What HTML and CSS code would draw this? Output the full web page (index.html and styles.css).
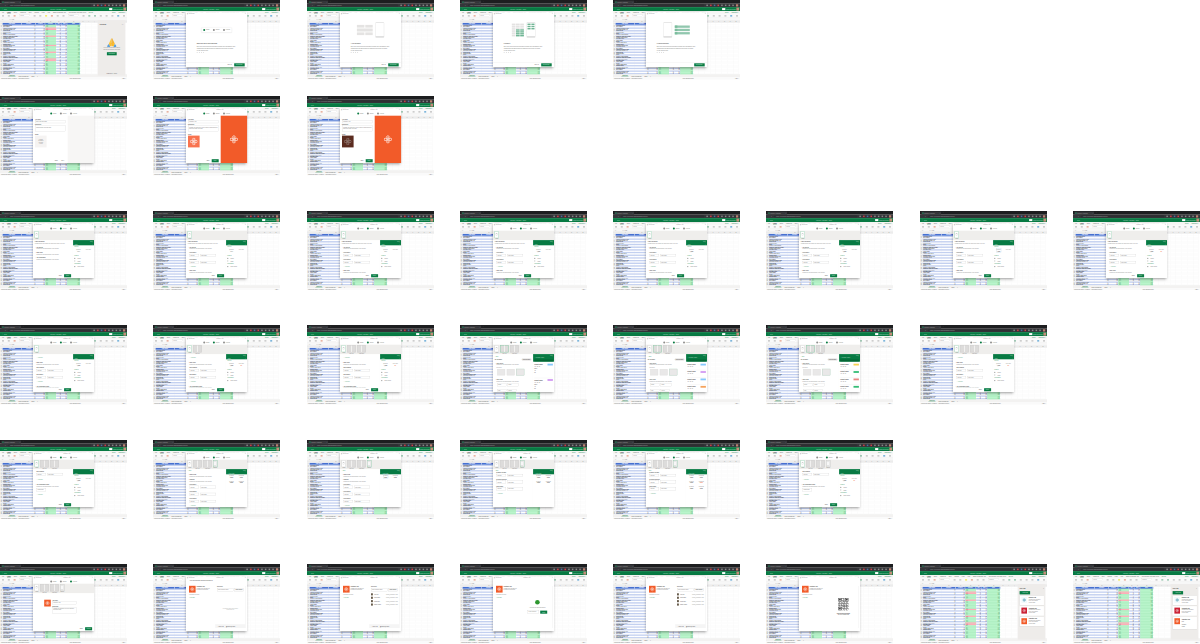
FILE: index.html
```html
<!DOCTYPE html>
<html lang="en">
<head>
<meta charset="utf-8">
<title>App builder flow</title>
<link rel="stylesheet" href="styles.css">
</head>
<body>
<main class="board" id="board"></main>
<script src="app.js"></script>
</body>
</html>
```

FILE: styles.css
```css
* { box-sizing: border-box; }
body { margin: 0; background: #fff; width: 1200px; height: 644px; overflow: hidden; font-family: "Open Sans", "Noto Sans", sans-serif; }
.board { display: grid; grid-template-rows: 96.3px 114.6px 114.5px 114.6px 124.5px 80px; }
.row { display: grid; grid-template-columns: repeat(8, 127px); column-gap: 26.25px; }
.frame { width: 127px; height: 79.5px; overflow: hidden; }
/* each screen is drawn at ten times its board size */
.screen { position: relative; width: 1270px; height: 795px; transform: scale(.1); transform-origin: 0 0; display: flex; flex-direction: column; font-size: 12px; line-height: 15px; color: #555; background: #fff; white-space: nowrap; }
.f { display: flex; align-items: center; }
.grow { flex: 1; }
.tabs { height: 37px; background: #1d1e20; color: #aaa; padding-left: 14px; gap: 20px; font-size: 11px; }
.tab { width: 197px; height: 31px; align-self: flex-end; background: #35363a; padding: 0 10px; gap: 8px; justify-content: space-between; }
.fav { width: 11px; height: 11px; background: #17a865; }
.addr { height: 34px; background: #35363a; color: #aaa; padding: 0 18px; gap: 22px; font-size: 12px; }
.url { flex: 1; height: 24px; border-radius: 12px; background: #2e2f32; padding: 3px 20px; }
.ext { width: 15px; height: 15px; background: #888; }
.ext.r { background: #d33e48; } .ext.b { background: #496ca1; } .ext.g { background: #be8270; width: 22px; height: 22px; }
.brand { height: 40px; background: #077a43; color: #b7dfc8; padding: 0 8px 0 16px; gap: 24px; justify-content: space-between; }
.toggle { width: 32px; height: 20px; background: #fff; }
.face { width: 28px; height: 30px; background: #c58d7b; }
.menu { height: 28px; background: #f6f5f4; padding: 0 20px; gap: 29px; color: #555; font-size: 13px; }
.menu .on { color: #333; font-weight: 700; border-bottom: 3px solid #217346; }
.menu .gr { color: #21854e; }
.tools { height: 41px; background: #fafafa; border-bottom: 2px solid #ddd; padding: 0 20px; justify-content: space-between; }
.tool { width: 20px; height: 15px; background: #c8c8c8; }
.tool.y { background: #f2e95e; } .tool.r { background: #e6ab98; } .tool.bl { background: #71afd8; } .tool.gr { background: #9bc8b2; }
.sel { width: 104px; height: 22px; background: #fff; border: 2px solid #ccc; color: #888; padding-left: 8px; }
.formula { height: 26px; padding: 0 18px; gap: 50px; border-bottom: 2px solid #ddd; color: #777; background: #f7f7f7; }
.heads, .line { display: grid; grid-template-columns: 26px 194px 140px 94px 108px 54px 58px 128px repeat(8, 57px); }
.heads { height: 21px; background: #ececec; color: #777; text-align: center; }
.lines { height: 520px; overflow: hidden; background: linear-gradient(90deg, transparent 454px, #b9f4cb 454px 562px, transparent 562px 674px, #b9f4cb 674px 802px, transparent 802px); }
.line { height: 13.45px; line-height: 13.4px; font-size: 11.5px; }
.line span { overflow: hidden; text-align: right; padding: 0 5px; color: #555; }
.line .e { border-right: 1px solid #e1e1e1; border-bottom: 1px solid #e8e8e8; }
.line span:first-child { background: #eee; color: #888; padding: 0 2px; text-align: center; }
.line span:nth-child(2) { text-align: left; color: #333; font-weight: 600; font-size: 11px; }
.line .d { border-right: 1px solid #d5dbe9; }
.line.odd .d { background-color: #c3d0f0; }
.line span.good { background: none; color: #4c9463; border: 0; }
.line.odd span.good { background: #b0efc3; }
.line span.bad, .line.odd span.bad { background-color: #ffadb8; color: #b5525a; border: 0; }
.line.top { height: 21px; }
.line.top .d { background: #4670d1; color: #fff; text-align: center; border-right: 8px solid #b9c7ea; font-weight: 700; line-height: 18px; }
.sheets { height: 27px; background: #f3f2f1; padding-left: 84px; gap: 30px; color: #555; border-top: 1px solid #ccc; }
.sheets b { color: #217346; background: #fff; border-bottom: 3px solid #217346; padding: 0 6px; }
.status { height: 22px; padding: 0 10px; justify-content: space-between; color: #666; background: #fafafa; font-size: 12px; }

.modal { position: absolute; left: 330px; top: 122px; width: 611px; height: 548px; background: #fff; box-shadow: 0 10px 28px rgba(0,0,0,.4), 0 0 4px rgba(0,0,0,.35); display: flex; flex-direction: column; }
.mhead { height: 30px; flex: none; padding: 0 12px; justify-content: space-between; color: #888; font-size: 11px; }
.note { height: 30px; flex: none; margin-bottom: -30px; padding: 10px 36px 0; color: #333; }
.steps { height: 45px; flex: none; justify-content: center; gap: 35px; font-size: 12px; padding-bottom: 2px; color: #777; }
.step { gap: 8px; }
.step i { width: 20px; height: 20px; border-radius: 10px; background: #8d8d8d; }
.step.on i { background: #087b43; }
.foot { flex: none; height: 46px; justify-content: flex-end; gap: 12px; padding-right: 20px; color: #444; }
.foot.with-line { padding-right: 24px; }
.foot.with-line .btn { width: 105px; padding: 0; }
.btn { background: #087b43; color: #b7dfc8; height: 31px; min-width: 70px; padding: 0 12px; display: flex; align-items: center; justify-content: center; font-weight: 600; }
.ghost { height: 30px; padding: 0 12px; display: flex; align-items: center; }
.intro { flex: 1; padding: 0 80px 0 107px; display: flex; flex-direction: column; }
.art { height: 255px; margin-left: -107px; margin-right: -80px; display: flex; align-items: center; justify-content: center; padding-top: 40px; gap: 27px; }
.pill { width: 305px; height: 48px; box-shadow: 0 2px 10px rgba(0,0,0,.2); justify-content: center; gap: 35px; border-radius: 3px; color: #777; }
.intro b { margin: 24px 0 9px; color: #555; }
.intro p { margin: 0 0 5px; color: #777; }
.dots { margin-top: 5px; gap: 14px; display: flex; }
.dots i { width: 8px; height: 8px; background: #aaa; border-radius: 4px; }
.with-line { border-top: 2px solid #ddd; }
.phone { width: 88px; height: 155px; border: 4px solid #e0e0e0; border-top-width: 9px; border-bottom-width: 16px; border-radius: 8px; padding: 5px; }
.boxes { width: 158px; display: grid; grid-template-columns: 1fr 1fr; gap: 9px; }
.boxes i { height: 27px; background: #e4e3e2; }
.boxes .wide { grid-column: span 2; height: 30px; }
.cells { display: grid; grid-template-columns: repeat(3, 37px); gap: 5px; }
.cells i { height: 14px; background: #e3e2e1; } .cells i.g { background: #6fb594; }
.cells.small { grid-template-columns: 1fr 1fr; gap: 8px; }
.bars { display: grid; gap: 10px; }
.bars i { width: 150px; height: 23px; background: #91c7ae; border-left: 26px solid #7bbd9d; }

.cols { flex: 1; display: flex; min-height: 0; }
.left { flex: 1; display: flex; flex-direction: column; min-width: 0; }
.form { padding: 26px 20px; flex: 1; display: flex; flex-direction: column; }
.lab { font-size: 11px; color: #444; font-weight: 600; }
.inp { border: 2px solid #c4c4c4; height: 31px; padding: 5px 9px; color: #777; font-size: 11px; margin: 2px 0 8px; }
.inp.tall { height: 62px; white-space: normal; margin-bottom: 20px; overflow: hidden; }
.tile { width: 116px; height: 118px; margin-top: 3px; background: #f5f3f2; display: flex; align-items: center; justify-content: center; text-align: center; color: #888; }
.tile.or { background: #f9734f; } .tile.dk { background: #5b2c20; }
.hero { width: 264px; background: #f7f6f5; display: flex; align-items: center; justify-content: center; }
.hero.or { background: #f25b29; }
.flower { display: block; }
.strip { height: 94px; flex: none; background: #efeeec; padding: 4px 16px; display: flex; gap: 12px; font-size: 11px; color: #777; }
.thumb { display: flex; flex-direction: column; align-items: center; width: 43px; }
.thumb.w { width: 88px; }
.thumb i { height: 73px; width: 43px; background: #fff; border: 4px solid #cbcac9; display: block; padding-top: 19px; }
.thumb.w i { width: 86px; background: #dddcdb; border: 5px solid #cfcecd; padding: 8px 0; }
.thumb.n i { background: #e9e9e8; padding-top: 8px; }
.thumb.on i { border-color: #8fcbab; }
.thumb i::after { content: ""; display: block; width: 14px; height: 16px; margin: auto; border: 3px solid #ccc; }
.thumb.w i::after { width: 10px; height: 63px; margin: -8px auto 0; background: #f2f1f0; border: 0; }
.thumb.n i::after { width: 26px; height: 34px; background: #f7f7f7; border-color: #d0d0d0; }
.body { flex: 1; padding: 10px 16px 0 18px; display: flex; flex-direction: column; overflow: hidden; font-size: 11.5px; }
.ti { color: #444; font-weight: 600; } .mu { color: #8c8c8c; } .gn { color: #3a9c69; } .body > div { flex: none; }
.fields { gap: 10px; } .fields .inp { height: 28px; padding: 4px 8px; margin: 0; width: 96px; } .fields .inp:nth-child(2) { width: 160px; }
.chip { background: #dddbda; padding: 3px 14px; color: #444; border-radius: 10px; }
.pics { display: flex; gap: 17px; } .pics i { width: 78px; height: 62px; background: #e9e8e8; border: 4px solid #e0e0df; } .pics i.on { outline: 3px solid #a9cdb9; }
.pv { width: 210px; display: flex; flex-direction: column; font-size: 11.5px; box-shadow: 0 0 8px rgba(0,0,0,.13); overflow: hidden; }
.pvh { flex: none; height: 52px; background: #077a43; color: #b9dfca; padding: 3px 12px; display: flex; flex-direction: column; justify-content: space-between; }
.pvh.big { height: 76px; } .pvh div { text-align: right; } .pvh span { display: flex; justify-content: space-between; }
.search { height: 19px; background: #056635; }
.pvb { padding: 6px 12px; display: flex; flex-direction: column; gap: 10px; }
.pair { display: flex; justify-content: space-around; text-align: center; gap: 8px; line-height: 18px; margin-bottom: 8px; color: #888; }
.home .pair { margin-bottom: 20px; }
.pair b { color: #555; } .pair .hot { color: #f2683a; } .pair .box { outline: 3px solid #bcd8ea; }
.item { display: flex; gap: 20px; align-items: center; color: #777; line-height: 18px; }
.item i { width: 11px; height: 11px; border: 3px solid #aaa; }
.cards { padding-top: 20px; }
.card { display: flex; justify-content: space-between; line-height: 17px; height: 64px; border-bottom: 2px solid #e0e0e0; color: #444; }
.card.deep { height: 144px; line-height: 20px; }
.tag { width: 54px; height: 18px; }
.app { width: 66px; height: 68px; background: #f25b29; display: flex; align-items: center; justify-content: center; flex: none; }
.publish { flex: 1; display: flex; padding: 66px 16px 30px 30px; gap: 20px; font-size: 11.5px; min-height: 0; }
.about { width: 242px; display: flex; flex-direction: column; gap: 14px; }
.who { display: flex; gap: 10px; line-height: 16px; color: #777; }
.who b { color: #444; }
.share { flex: 1; background: #fff; padding: 0 18px; display: flex; flex-direction: column; box-shadow: 0 1px 5px rgba(0,0,0,.12); }
.share .inp { flex: 1; height: 34px; margin: 0; }
.invite { display: flex; gap: 8px; margin: 8px 0 18px; } .invite .ghost { border: 2px solid #ccc; height: 34px; background: #fafafa; color: #222; }
.person { display: flex; gap: 12px; align-items: center; margin-bottom: 13px; color: #444; } .person i { width: 19px; height: 21px; background: #675b4c; } .person span { margin-left: auto; color: #999; }
.sbar { height: 38px; margin: auto -18px 0; background: #f5f5f5; display: flex; gap: 20px; align-items: center; padding-left: 22px; color: #444; }
.center { flex: 1; display: flex; flex-direction: column; align-items: center; justify-content: center; gap: 22px; color: #777; }
.scan { text-align: center; color: #444; }
.faint { color: #aaa; text-align: center; }
.ok { width: 46px; height: 46px; border-radius: 23px; background: #2d962f; }
.last { padding: 66px 100px 0 112px; display: flex; gap: 14px; flex: 1; font-size: 11px; } .last .grow { max-width: 245px; }

.panel { position: absolute; left: 977px; top: 202px; width: 276px; height: 554px; background: #eeecea; padding: 40px 14px 16px 19px; font-size: 11.5px; display: flex; flex-direction: column; }
.apps { padding-top: 64px; }
.panel .pt { display: flex; justify-content: space-between; color: #444; font-weight: 700; }
.panel.apps .pt { margin-top: -24px; }
.hands { display: flex; flex-direction: column; align-items: center; margin-top: 121px; color: #777; text-align: center; }
.hands .btn { margin-top: 22px; width: 98px; }
.by { margin-top: auto; text-align: center; }
.pc { background: #fff; box-shadow: 0 1px 5px rgba(0,0,0,.2); display: flex; gap: 18px; padding: 14px 18px; height: 94px; margin-top: 12px; line-height: 15px; color: #777; flex: none; }
.pc b { color: #333; } .pc .app { width: 56px; height: 60px; }
.pc.open { height: 124px; line-height: 24px; color: #555; }
.panel .new { width: 105px; margin-top: 14px; height: 33px; }
.app.red { background: #cb2033; } .app.cy { background: #f2fafc; }
```

FILE: app.js
```javascript
const names = ['Fernando Garcia', 'Organic Arabica Beans', 'Roasted Blend', 'Coffee Grinder', 'Kenya', 'Cold Brew Extract (12)', 'Espresso Shots', 'Milk Frother', 'Seasonal House Dark Roast', 'Colombia Special Pack', 'Decaf', 'French Press Filters', 'Vanilla Syrup', 'Travel Mugs', 'Hazelnut Creamer Pods', 'Ethiopia Single Origin'];
const bad = [2, 3, 8, 15, 20, 25, 26];
const rep = (n, f) => Array.from({ length: n }, (_, i) => f(i)).join('');

function flower(size, color) {
  return `<svg class="flower" width="${size}" height="${size}" viewBox="0 0 80 80" fill="none" stroke="${color}" stroke-width="7"><rect x="29" y="4" width="22" height="24" rx="9"/><rect x="29" y="52" width="22" height="24" rx="9"/><rect x="4" y="29" width="24" height="22" rx="9"/><rect x="52" y="29" width="24" height="22" rx="9"/><path d="M26 26 54 54M54 26 26 54"/></svg>`;
}

const blanks = rep(8, () => '<span class="e"></span>');
function sheet() {
  const line = i => {
    const c = bad.includes(i) ? 'bad' : 'good';
    return `<div class="line ${i % 2 ? '' : 'odd'}"><span>${i + 2}</span><span class="d">${names[(i * 7) % 16]}</span><span class="d">${i % 3 + 10}</span><span class="d">${20 + i}</span><span class="d ${c}" style="text-align:left">${120 + i * 3}</span><span class="d">${10 + i}</span><span class="d">${30 + i}</span><span class="d good">${300 + i * 9}</span>${blanks}</div>`;
  };
  return `<div class="f tabs"><div class="f tab"><i class="fav"></i><span class="grow">Inventory Workbook</span>×</div>+</div>
  <div class="f addr">← → ↻<div class="f url">https://excel.office.com/workbook/inventory</div><i class="ext"></i><i class="ext r"></i><i class="ext b"></i><i class="ext r"></i><i class="ext"></i><i class="ext"></i><i class="ext"></i><i class="ext"></i><i class="ext g"></i></div>
  <div class="f brand"><span>⠿ &nbsp; &nbsp; Excel</span><span>Inventory Workbook – Saved</span><span class="f"><i class="toggle"></i>&nbsp; Simplified Ribbon &nbsp;<i class="face"></i></span></div>
  <div class="f menu"><span>File</span><span class="on">Home</span><span>Insert</span><span>Formulas</span><span>Data</span><span>Review</span><span>View</span><span>Help</span><span>Open in Desktop App</span><span>Tell me what you want to do</span><span class="gr">Editing</span><span class="grow"></span><span class="gr">Share</span><span class="gr">Comments</span></div>
  <div class="f tools"><i class="tool"></i><i class="tool"></i><i class="tool r"></i><div class="sel">Calibri</div><i class="tool"></i><i class="tool"></i><i class="tool y"></i><i class="tool r"></i><i class="tool"></i><i class="tool"></i><div class="sel">General</div><i class="tool"></i><i class="tool gr"></i><i class="tool gr"></i><i class="tool"></i><i class="tool"></i><i class="tool"></i><i class="tool bl"></i><i class="tool"></i></div>
  <div class="f formula"><span>A1 ⌄</span><span>fx &nbsp; Item</span></div>
  <div class="heads"><span></span>${rep(15, i => `<span>${String.fromCharCode(65 + i)}</span>`)}</div>
  <div class="lines"><div class="line top"><span>1</span>${['Item Name', 'Category', 'In Stock', 'Reorder', 'Min', 'Max', 'Total'].map(t => `<span class="d">${t}</span>`).join('')}${blanks}</div>${rep(37, line)}</div>
  <div class="f sheets"><b>Inventory</b><span>Store Information</span><span>Sales</span><span>⊕</span></div>
  <div class="f status"><span>Calculation Mode: Automatic &nbsp; Workbook Statistics</span><span>Help Improve Office</span><span>− 100% +</span></div>`;
}

const steps = on => `<div class="f steps">${['Basics', 'Design', 'Publish'].map((t, i) => `<span class="f step ${i === on ? 'on' : ''}"><i></i>${t}</span>`).join('')}</div>`;
const modal = (inner, title = 'Inventory App') => `<div class="modal"><div class="f mhead"><span>▣ App Builder</span><span>${title}</span><span>✕</span></div>${inner}</div>`;
const foot = (green = 'Next', cls = '', back = '‹ Back') => `<div class="f foot ${cls}"><div class="ghost">${back}</div><div class="btn">${green}</div></div>`;

function intro(n) {
  const cells = (c, k, g) => `<div class="cells ${c}">${rep(k, i => `<i class="${g(i) ? 'g' : ''}"></i>`)}</div>`;
  const art = [
    `<div class="f pill"><span class="f step on"><i></i>Basics</span><span class="f step"><i></i>Design</span><span class="f step"><i></i>Publish</span></div>`,
    `<div class="boxes"><i></i><i></i><i class="wide"></i><i></i><i></i></div><div class="phone"></div>`,
    `${cells('', 21, i => i > 8 && i % 3)}<div class="phone">${cells('small', 6, () => true)}</div>`,
    `<div class="phone"></div><div class="bars"><i></i><i></i><i></i></div>`][n];
  const head = ['Make your app in three easy steps', '1. Tell the basics', '2. Design it', '3. Publish and share'][n];
  return modal(`<div class="intro"><div class="art">${art}</div><b>${head}</b><p>Enter your app details and add pages to show your spreadsheet data</p><p>Choose which columns should be displayed and edited by people</p><p>in your organization</p><div class="dots">${rep(4, () => '<i></i>')}</div></div>${foot('Get started ›', 'with-line', n === 3 ? '' : 'Next tip')}`, '');
}

function basics(kind) {
  const tile = kind ? flower(76, kind === 'dk' ? '#a08c86' : '#fff') : 'Upload<br>an image<br>or drop<br>it here';
  return modal(`${steps(0)}<div class="cols"><div class="left"><div class="form"><span class="lab">App Name</span><div class="inp">${kind ? 'Inventory App' : 'Enter your app name'}</div><span class="lab">Description</span><div class="inp tall">${kind ? 'Manage the inventory of all our stores in one place and keep your stock up to date' : 'Describe what your app does'}</div><span class="lab">Image</span><div class="tile ${kind}">${tile}</div></div><div class="f foot"><div class="ghost">‹ Back</div><div class="${kind ? 'btn' : 'ghost'}">Next ›</div></div></div><div class="hero ${kind ? 'or' : ''}">${kind ? flower(82, '#fff') : ''}</div></div>`);
}

const at = (gap, html) => `<div style="margin-top:${gap}px">${html}</div>`;
const field = (gap, label) => at(gap, `<span class="ti">&nbsp; &nbsp; &nbsp;${label}</span>`) + at(4, `<div class="f fields" style="padding-left:16px"><div class="inp">Column ⌄</div><div class="inp">Item Name</div><span class="mu">&nbsp; &nbsp; ···</span></div>`);
const section = (gap, t) => at(gap, `<span class="ti">⌄ &nbsp;${t}</span>`) + at(3, `<span class="mu">&nbsp; &nbsp; &nbsp;Choose the columns shown in this section</span>`);
const link = gap => at(gap, '<span class="gn">&nbsp; &nbsp; &nbsp; + &nbsp;Add field</span>');

const phoneBar = '<div>▰ ▰ ▮</div>';
function preview(kind, hot) {
  if (kind === 'cards') {
    const colors = hot === 2 ? ['#f7d254', '#35bd76', '#e98583', '#35bd76'] : ['#86c8fb', '#d29af2', '#86c8fb', '#f5a35d'];
    return `<div class="pv"><div class="pvh big">${phoneBar}<span>‹ &nbsp; Inventory Items</span><div class="search"></div></div><div class="pvb cards">${rep(hot ? 4 : 2, i => `<div class="card ${hot ? '' : 'deep'}"><span><b>Product Name</b><br>12 &nbsp; 48 &nbsp; 24${hot ? '' : '<br>Store<br>18<br>32'}</span><i class="tag" style="background:${colors[i]}"></i></div>`)}</div></div>`;
  }
  if (kind === 'pairs') {
    return `<div class="pv"><div class="pvh">${phoneBar}<span>‹ &nbsp; Item Name</span></div><div class="pvb">${rep(hot + 1, i => `<div class="pair"><span class="${hot ? '' : 'box'}">Quantity<br><b>Stock</b></span><span>Minimum<br><b class="${i === 1 && hot > 1 ? 'hot' : ''}">Total</b></span></div>`)}</div></div>`;
  }
  return `<div class="pv"><div class="pvh">${phoneBar}<span>Home <i>≡</i></span></div><div class="pvb home"><span class="gn">Metrics</span><div class="pair"><span class="${hot === 2 ? 'box' : ''}">Quantity<br>${hot ? '<b>1,280</b>' : 'Stock'}</span><span>Min Value<br>${hot === 3 ? '<b class="hot">36</b>' : ''}</span></div><span class="gn">Reports</span><div class="item"><i></i>Stores</div><div class="item"><i></i>Items</div><span class="gn">Information</span><div class="item"><i></i>Store details</div></div></div>`;
}

function thumbs(n, on) {
  const t = ['Home', 'Item List', 'Item Page', 'Details'];
  return rep(n, i => `<div class="thumb ${i === 1 || i === 2 ? 'w' : i === 3 ? 'n' : ''} ${i === on ? 'on' : ''}"><i></i>${t[i]}</div>`);
}

const title = '<div class="ti">Home Navigation</div><div class="mu" style="margin-top:4px">Choose what your people see when they open your app</div>';
const back = '<div class="gn">‹ &nbsp;Back</div>';
const bodies = {
  empty: title + section(18, 'Key Metrics') + section(22, 'Data Views') + section(17, 'App Information'),
  fields: title + section(18, 'Key Metrics') + field(25, 'Field Name 1') + field(23, 'Field Name 2') + link(22) + section(25, 'Data Views'),
  home: link(20) + section(32, 'Data Views') + field(20, 'Item Manager') + field(24, 'Item Details') + link(22) + section(28, 'App Information Pages'),
  table: at(8, back) + at(10, '<div class="f" style="justify-content:space-between"><span class="ti">My Inventory</span><span class="chip">Edit Columns</span></div>') + section(18, 'Card Layout') + at(12, '<span class="mu">&nbsp; &nbsp; &nbsp;Card Style</span>') + at(8, '<div class="pics" style="padding-left:25px"><i></i><i></i><i class="on"></i></div>') + section(35, 'Card Fields') + at(14, '<div class="f fields" style="padding-left:22px"><div class="inp">Name</div><div class="inp" style="width:110px">Stock</div></div>') + at(27, '<div class="f fields" style="padding-left:22px"><div class="inp">Item</div><div class="inp" style="width:90px">Status</div></div>'),
  info: field(10, 'Item Manager') + link(34) + section(30, 'App Information Pages') + at(14, '<div class="f fields" style="padding-left:16px"><div class="inp">Information</div></div>') + link(22),
  detail: back + section(22, 'Details Page') + section(18, 'Summary') + field(17, 'Field Name 1') + field(24, 'Field Name 2') + field(24, 'Field Name 3') + link(18),
  scroll: back + field(5, 'Quantity on hand') + field(20, 'Minimum Quantity') + field(20, 'Stock Status') + link(26)
};
function design(o) {
  return modal(`${steps(1)}<div class="strip">${thumbs(o.n || 1, o.on || 0)}<span class="grow"></span><span style="align-self:flex-end">⌄</span></div><div class="cols"><div class="left"><div class="body">${bodies[o.body]}</div>${o.nofoot ? '' : foot('Next ›')}</div>${preview(o.pv, o.hot || 0)}</div>`);
}

const who = `<div class="who"><div class="app">${flower(44, '#fff')}</div><span><b>Inventory App</b><br>Manage the inventory of<br>all stores in one place</span></div>`;
function qr() {
  return `<svg width="104" height="124" viewBox="0 0 21 25" fill="#222"><path d="M0 0h7v7H0zM14 0h7v7h-7zM0 18h7v7H0z"/><path fill="#fff" d="M1 1h5v5H1zM15 1h5v5h-5zM1 19h5v5H1z"/><path d="M2 2h3v3H2zM16 2h3v3h-3zM2 20h3v3H2z"/>${rep(25, y => rep(21, x => ((x > 7 && x < 13) || (y > 7 && y < 17) || (x > 7 && y > 7)) && (x * 7 + y * 11 + x * y) % 5 < 3 ? `<path d="M${x} ${y}h1v1h-1z"/>` : ''))}</svg>`;
}
function publish(k) {
  const invite = `<span class="lab">Share with</span><div class="invite"><div class="inp">Enter name or email</div><div class="ghost">Invite People</div></div>`;
  const people = rep(4, i => `<div class="person"><i></i>${['Ann Lee', 'Mark Chan', 'Maria Diaz', 'Daniel Wood'][i]}<span>name@company.com</span></div>`);
  const bar = '<div class="sbar"><span>∞ Copy Link</span><span>▣ Share QR Code</span></div>';
  const inner = {
    new: invite + '<div class="center"><span class="faint">No people have been added<br>to this app yet</span></div>' + bar,
    people: invite + people + bar,
    link: '<div class="center"><i class="ok"></i><span>Your app link has been copied</span><div class="f" style="gap:12px"><div class="inp" style="width:115px">https://app/inv</div><div class="btn">Done</div></div></div>',
    qr: `<div class="center">${qr()}<span class="scan"><b>Scan to open on phone</b><br>Use your camera app</span></div>`
  }[k];
  return modal(`${k === 'new' ? '<div class="note">Your app has been published successfully</div>' : ''}<div class="publish"><div class="about">${who}<span class="mu">Published just now</span><span class="gn">✎ Edit app</span></div><div class="share">${inner}</div></div>`);
}
const confirm = modal(`${steps(2)}<div class="strip">${thumbs(4, -1)}</div><div class="last"><div class="app">${flower(44, '#fff')}</div><div class="grow"><span class="lab">App Name</span><div class="inp">Inventory App</div><span class="lab">Description</span><div class="inp tall">Manage the inventory of all our stores in one place today</div></div></div>${foot('Publish')}`);

const hands = `<svg width="94" height="92" viewBox="0 0 94 92"><path d="M44 2 18 58 24 72 44 62Z" fill="#ffc83d"/><path d="M50 2 76 58 70 72 50 62Z" fill="#f5b32f"/><path d="M20 56 24 84 45 84V50ZM74 56 70 84 49 84V50Z" fill="#ffc02e"/><path d="M0 82 16 62 30 86 26 91H2ZM94 82 78 62 64 86 68 91H92Z" fill="#5a9fdc"/><path d="M47 8V80" stroke="#dc9420" stroke-width="5"/></svg>`;
const welcome = `<div class="panel"><div class="pt"><span>App Builder</span><span>× ⌄</span></div><div class="hands">${hands}<span>Turn your spreadsheet into an<br>app for everyone on your team</span><div class="btn">Get started</div></div><div class="by">Powered by <b class="gn">●</b> Excel</div></div>`;
const apps = last => `<div class="panel apps"><div class="pt"><span>Your Apps</span><span>×</span></div><div class="btn new">+ New App</div>${[['cy', 'Delivery App', '#318ca8'], ['red', 'Checkout App', '#fff'], ['', 'Inventory App', '#fff']].map((a, i) => `<div class="pc ${last && i === 2 ? 'open' : ''}"><div class="app ${a[0]}">${flower(36, a[2])}</div><span><b>${a[1]}</b><br>${last && i === 2 ? 'Edit<br>Manage<br>Share' : 'Manage the inventory<br>of all your stores<br>in one place'}</span></div>`).join('')}</div>`;

const cards = i => design({ n: 3, on: 1, body: 'table', pv: 'cards', hot: i, nofoot: true });
const board = [
  [welcome, intro(0), intro(1), intro(2), intro(3)],
  [basics(''), basics('or'), basics('dk')],
  [design({ body: 'empty' }), ...[0, 0, 1, 1, 1, 2, 3].map(h => design({ body: 'fields', hot: h }))],
  [design({ body: 'home', hot: 1 }), design({ n: 2, body: 'home', hot: 3 }), design({ n: 3, body: 'home', hot: 3 }), cards(0), cards(1), cards(2), design({ n: 3, body: 'home', hot: 3 })],
  [design({ n: 3, body: 'info', hot: 1 }), design({ n: 4, on: 3, body: 'detail', pv: 'pairs', hot: 1, nofoot: true }), design({ n: 4, on: 3, body: 'detail', pv: 'pairs', hot: 0, nofoot: true }), design({ n: 4, on: 3, body: 'scroll', pv: 'pairs', hot: 1, nofoot: true }), design({ n: 4, on: 3, body: 'scroll', pv: 'pairs', hot: 2, nofoot: true }), design({ n: 4, body: 'info', hot: 3 })],
  [confirm, publish('new'), publish('people'), publish('link'), publish('people'), publish('qr'), apps(false), apps(true)]
];
document.getElementById('board').innerHTML = board.map(r => `<section class="row">${r.map(s => `<div class="frame"><div class="screen">${sheet()}${s}</div></div>`).join('')}</section>`).join('');
```
